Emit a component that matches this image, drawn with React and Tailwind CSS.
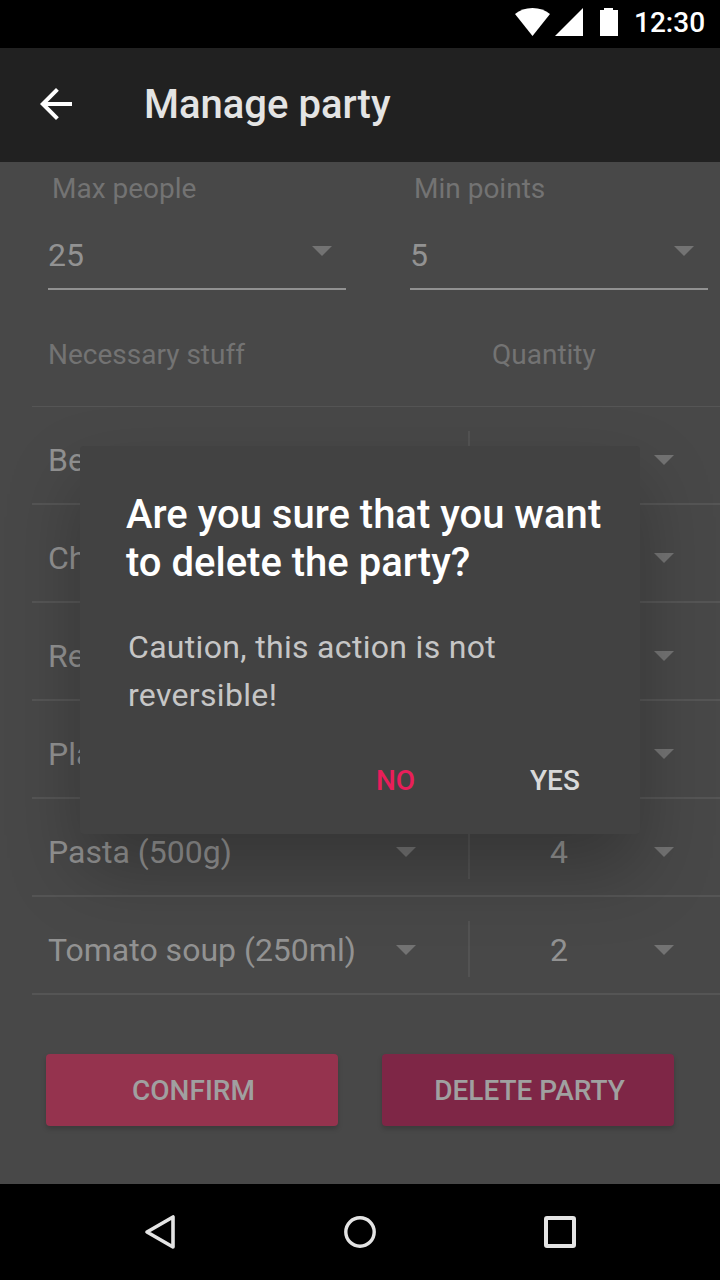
const stuff = [
  { name: "Beer", quantity: "" },
  { name: "Chips", quantity: "" },
  { name: "Red", quantity: "" },
  { name: "Plates", quantity: "" },
  { name: "Pasta (500g)", quantity: "4" },
  { name: "Tomato soup (250ml)", quantity: "2" },
];

function Caret() {
  return (
    <svg className="h-[10px] w-5 shrink-0 fill-[#737373]" viewBox="0 0 20 10">
      <path d="M0 0h20L10 10z" />
    </svg>
  );
}

function StatusBar() {
  return (
    <div className="flex h-12 shrink-0 items-center bg-black pl-[515px] text-white">
      <svg className="-mt-1 h-7 w-[35px] shrink-0 fill-white" viewBox="0 0 35 28">
        <path d="M17.5 28 0 5.9C4.600 2.200 10.500 0 17.500 0S30.400 2.200 35 5.900z" />
      </svg>
      <svg className="-mt-1 ml-[5px] h-7 w-7 shrink-0 fill-white" viewBox="0 0 28 28">
        <path d="M0 28 28 0v28z" />
      </svg>
      <svg className="-mt-1 ml-[17px] h-7 w-[18px] shrink-0 fill-white" viewBox="0 0 18 28">
        <path d="M4 0h9v2h5v26H0V2h4z" />
      </svg>
      <span className="ml-4 -mt-0.5 text-[28px] leading-8 font-medium">12:30</span>
    </div>
  );
}

function AppBar() {
  return (
    <header className="flex h-[114px] shrink-0 items-start bg-[#212121] pt-8 pl-8">
      <svg className="h-12 w-12 shrink-0 fill-white" viewBox="0 0 24 24">
        <path d="M20 11H7.830l5.590-5.590L12 4l-8 8 8 8 1.410-1.410L7.830 13H20z" />
      </svg>
      <h1 className="mt-px ml-16 text-[40px] leading-12 font-medium text-[#e4e4e4]">Manage party</h1>
    </header>
  );
}

function Select({ label, value }) {
  return (
    <div className="w-[298px]">
      <div className="pl-1 text-[28px] leading-8 text-[#737373]">{label}</div>
      <div className="mt-[25px] flex h-[60px] items-start justify-between border-b-2 border-[#919191] pr-[14px]">
        <span className="pt-[5px] text-[32px] leading-10 text-[#929292]">{value}</span>
        <div className="pt-4">
          <Caret />
        </div>
      </div>
    </div>
  );
}

function StuffRow({ name, quantity }) {
  return (
    <li className="flex h-[98px] border-b-2 border-[#555555] text-[32px] leading-10 text-[#929292]">
      <div className="flex w-[436px] items-center justify-between pt-[10px] pr-[52px] pl-4">
        <span>{name}</span>
        <Caret />
      </div>
      <div className="mt-6 h-14 w-0.5 bg-[#535353]" />
      <div className="flex flex-1 items-center justify-end pt-[10px] pr-[46px]">
        <span className="mr-[86px]">{quantity}</span>
        <Caret />
      </div>
    </li>
  );
}

function Dialog() {
  return (
    <div className="absolute top-[446px] left-20 h-[388px] w-[560px] rounded bg-[#424242] pt-[45px] pl-[46px] shadow-[0_36px_72px_rgba(0,0,0,0.26)]">
      <h2 className="w-[490px] text-[40px] leading-12 font-medium text-white">
        Are you sure that you want
        <br />
        to delete the party?
      </h2>
      <p className="mt-9 pl-0.5 text-[32px] leading-12 tracking-[0.01em] text-[#c6c6c6]">
        Caution, this action is not
        <br />
        reversible!
      </p>
      <div className="mt-[46px] flex pl-[250px] text-[28px] leading-8 font-medium">
        <button className="w-[154px] text-left text-[#e91e5a]">NO</button>
        <button className="text-[#d9d9d9]">YES</button>
      </div>
    </div>
  );
}

function NavBar() {
  return (
    <nav className="flex h-24 shrink-0 items-center justify-center gap-[160px] bg-black">
      <svg className="h-10 w-10" viewBox="0 0 40 40" fill="none" stroke="#e4e4e4" strokeWidth="3.600" strokeLinejoin="round">
        <path d="M7 20 33 5v30z" />
      </svg>
      <svg className="h-10 w-10" viewBox="0 0 40 40" fill="none" stroke="#e4e4e4" strokeWidth="3.400">
        <circle cx="20" cy="20" r="14.200" />
      </svg>
      <svg className="h-10 w-10" viewBox="0 0 40 40" fill="none" stroke="#e4e4e4" strokeWidth="4">
        <rect x="6" y="6" width="28" height="28" rx="1" />
      </svg>
    </nav>
  );
}

export default function App() {
  return (
    <div className="relative flex h-[1280px] w-[720px] flex-col overflow-hidden bg-[#484848] font-['Roboto',sans-serif]">
      <StatusBar />
      <AppBar />
      <main className="flex-1 pt-[11px]">
        <div className="flex gap-16 pl-12">
          <Select label="Max people" value="25" />
          <Select label="Min points" value="5" />
        </div>
        <div className="ml-8 flex h-[117px] border-b border-[#555555] pt-[49px] pl-4 text-[28px] leading-8 text-[#737373]">
          <span className="w-[444px]">Necessary stuff</span>
          <span>Quantity</span>
        </div>
        <ul className="ml-8">
          {stuff.map((item) => (
            <StuffRow key={item.name} {...item} />
          ))}
        </ul>
        <div className="mt-[59px] flex gap-11 pl-[46px] text-[28px] font-medium text-[#a0a0a0]">
          <button className="h-[72px] w-[292px] rounded bg-[#95334e] pt-0.5 pl-[3px] shadow-[0_3px_5px_rgba(0,0,0,0.18)]">CONFIRM</button>
          <button className="h-[72px] w-[292px] rounded bg-[#7e2646] pt-0.5 pl-[3px] shadow-[0_3px_5px_rgba(0,0,0,0.18)]">DELETE PARTY</button>
        </div>
      </main>
      <NavBar />
      <Dialog />
    </div>
  );
}
